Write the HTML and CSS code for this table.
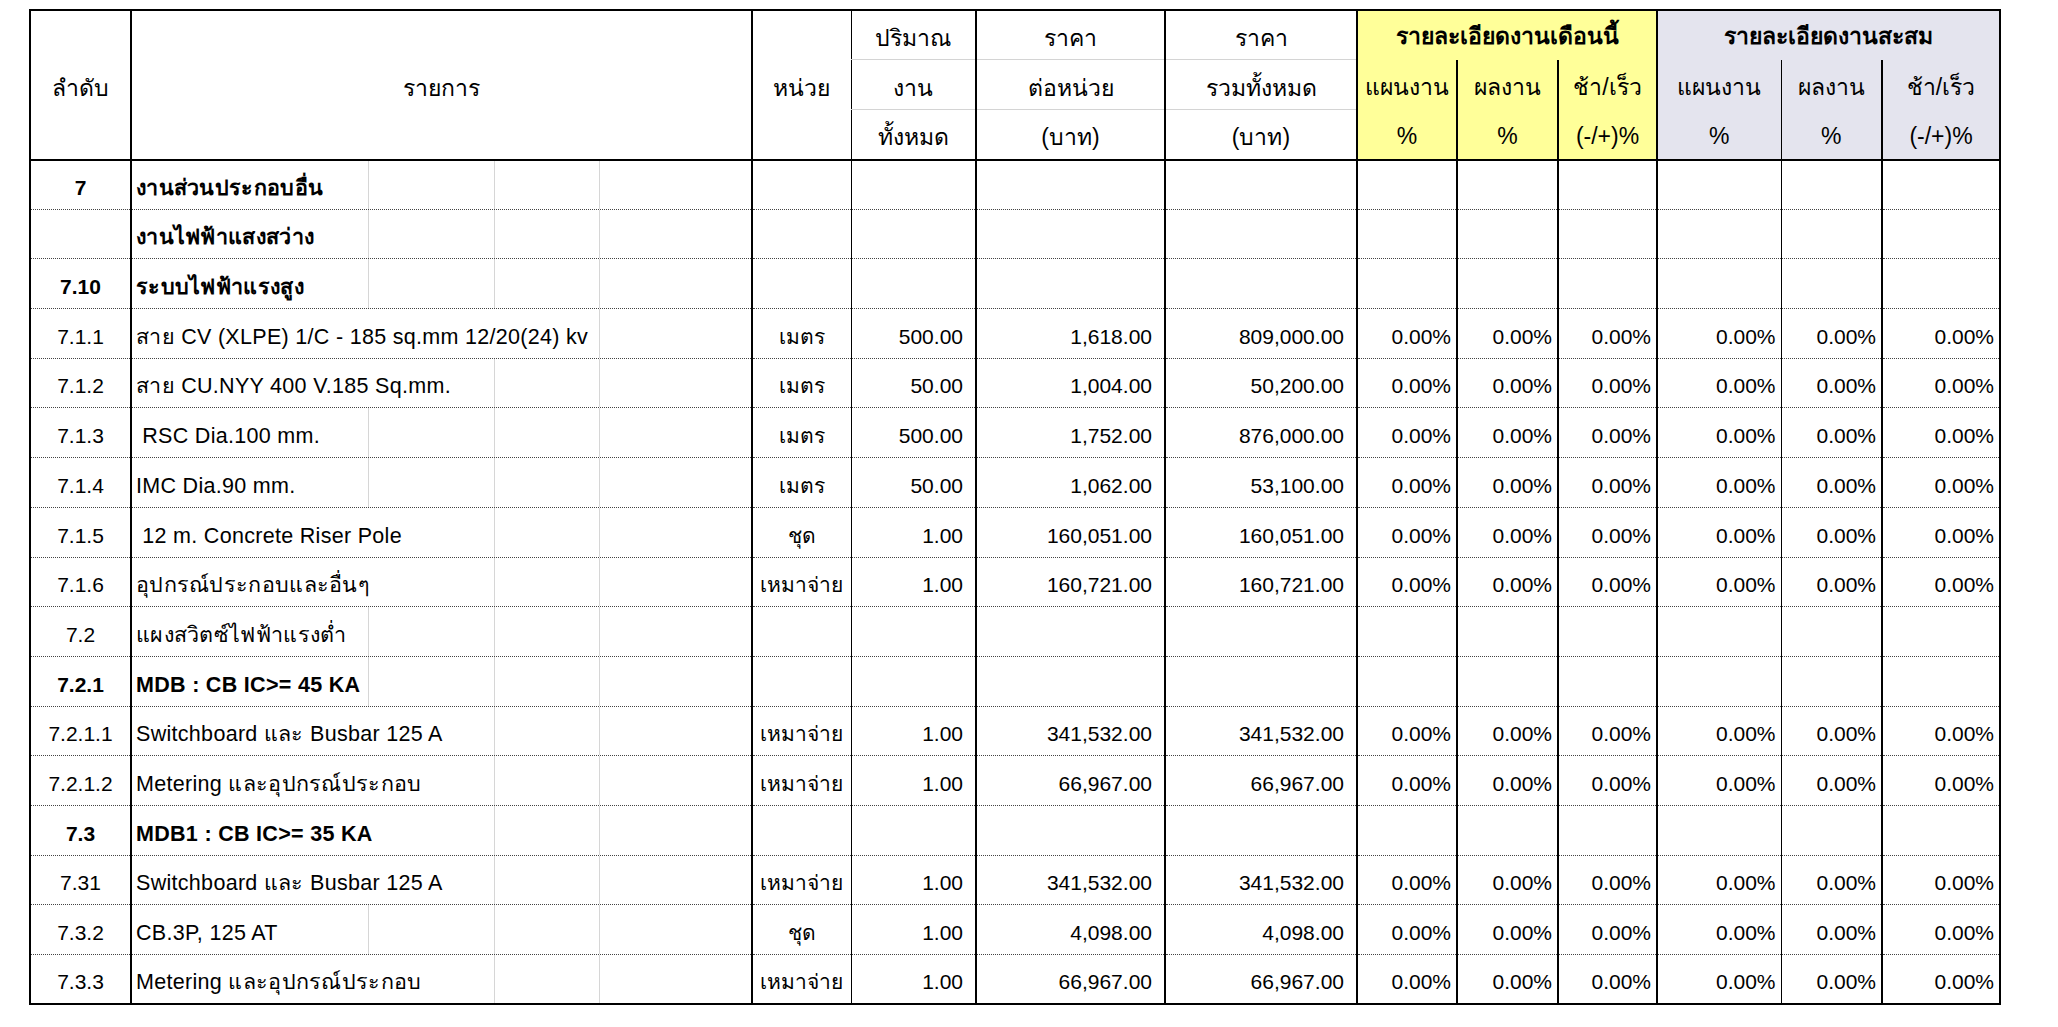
FILE: index.html
```html
<!DOCTYPE html>
<html lang="th">
<head>
<meta charset="utf-8">
<title>รายละเอียดงาน</title>
<link rel="stylesheet" href="styles.css">
</head>
<body>
<table class="sheet">
  <colgroup>
    <col class="c-no">
    <col class="c-item">
    <col class="c-unit">
    <col class="c-qty">
    <col class="c-price">
    <col class="c-total">
    <col class="c-p1">
    <col class="c-p2">
    <col class="c-p3">
    <col class="c-p4">
    <col class="c-p5">
    <col class="c-p6">
  </colgroup>
  <thead>
    <tr class="hr">
      <th rowspan="3" class="hb">ลำดับ</th>
      <th rowspan="3" class="hb">รายการ</th>
      <th rowspan="3" class="hb">หน่วย</th>
      <th class="grid">ปริมาณ</th>
      <th class="grid">ราคา</th>
      <th class="grid">ราคา</th>
      <th colspan="3" class="yel grp">รายละเอียดงานเดือนนี้</th>
      <th colspan="3" class="gry grp">รายละเอียดงานสะสม</th>
    </tr>
    <tr class="hr">
      <th class="grid">งาน</th>
      <th class="grid">ต่อหน่วย</th>
      <th class="grid">รวมทั้งหมด</th>
      <th rowspan="2" class="yel sub hb"><div class="l1">แผนงาน</div><div class="l2">%</div></th>
      <th rowspan="2" class="yel sub hb"><div class="l1">ผลงาน</div><div class="l2">%</div></th>
      <th rowspan="2" class="yel sub hb"><div class="l1">ช้า/เร็ว</div><div class="l2">(-/+)%</div></th>
      <th rowspan="2" class="gry sub hb"><div class="l1">แผนงาน</div><div class="l2">%</div></th>
      <th rowspan="2" class="gry sub hb"><div class="l1">ผลงาน</div><div class="l2">%</div></th>
      <th rowspan="2" class="gry sub hb"><div class="l1">ช้า/เร็ว</div><div class="l2">(-/+)%</div></th>
    </tr>
    <tr class="hr">
      <th class="hb">ทั้งหมด</th>
      <th class="hb">(บาท)</th>
      <th class="hb">(บาท)</th>
    </tr>
  </thead>
  <tbody>
    <tr><td class="no b">7</td><td class="item b"><span class="t">งานส่วนประกอบอื่น</span></td><td></td><td></td><td></td><td></td><td></td><td></td><td></td><td></td><td></td><td></td></tr>
    <tr><td class="no"></td><td class="item b"><span class="t">งานไฟฟ้าแสงสว่าง</span></td><td></td><td></td><td></td><td></td><td></td><td></td><td></td><td></td><td></td><td></td></tr>
    <tr><td class="no b">7.10</td><td class="item b"><span class="t">ระบบไฟฟ้าแรงสูง</span></td><td></td><td></td><td></td><td></td><td></td><td></td><td></td><td></td><td></td><td></td></tr>
    <tr><td class="no">7.1.1</td><td class="item"><span class="t">สาย CV (XLPE) 1/C - 185 sq.mm 12/20(24) kv</span></td><td class="unit">เมตร</td><td class="num">500.00</td><td class="num">1,618.00</td><td class="num">809,000.00</td><td class="pct">0.00%</td><td class="pct">0.00%</td><td class="pct">0.00%</td><td class="pct">0.00%</td><td class="pct">0.00%</td><td class="pct">0.00%</td></tr>
    <tr><td class="no">7.1.2</td><td class="item"><span class="t">สาย CU.NYY 400 V.185 Sq.mm.</span></td><td class="unit">เมตร</td><td class="num">50.00</td><td class="num">1,004.00</td><td class="num">50,200.00</td><td class="pct">0.00%</td><td class="pct">0.00%</td><td class="pct">0.00%</td><td class="pct">0.00%</td><td class="pct">0.00%</td><td class="pct">0.00%</td></tr>
    <tr><td class="no">7.1.3</td><td class="item"><span class="t"> RSC Dia.100 mm.</span></td><td class="unit">เมตร</td><td class="num">500.00</td><td class="num">1,752.00</td><td class="num">876,000.00</td><td class="pct">0.00%</td><td class="pct">0.00%</td><td class="pct">0.00%</td><td class="pct">0.00%</td><td class="pct">0.00%</td><td class="pct">0.00%</td></tr>
    <tr><td class="no">7.1.4</td><td class="item"><span class="t">IMC Dia.90 mm.</span></td><td class="unit">เมตร</td><td class="num">50.00</td><td class="num">1,062.00</td><td class="num">53,100.00</td><td class="pct">0.00%</td><td class="pct">0.00%</td><td class="pct">0.00%</td><td class="pct">0.00%</td><td class="pct">0.00%</td><td class="pct">0.00%</td></tr>
    <tr><td class="no">7.1.5</td><td class="item"><span class="t"> 12 m. Concrete Riser Pole</span></td><td class="unit">ชุด</td><td class="num">1.00</td><td class="num">160,051.00</td><td class="num">160,051.00</td><td class="pct">0.00%</td><td class="pct">0.00%</td><td class="pct">0.00%</td><td class="pct">0.00%</td><td class="pct">0.00%</td><td class="pct">0.00%</td></tr>
    <tr><td class="no">7.1.6</td><td class="item"><span class="t">อุปกรณ์ประกอบและอื่นๆ</span></td><td class="unit">เหมาจ่าย</td><td class="num">1.00</td><td class="num">160,721.00</td><td class="num">160,721.00</td><td class="pct">0.00%</td><td class="pct">0.00%</td><td class="pct">0.00%</td><td class="pct">0.00%</td><td class="pct">0.00%</td><td class="pct">0.00%</td></tr>
    <tr><td class="no">7.2</td><td class="item"><span class="t">แผงสวิตซ์ไฟฟ้าแรงต่ำ</span></td><td></td><td></td><td></td><td></td><td></td><td></td><td></td><td></td><td></td><td></td></tr>
    <tr><td class="no b">7.2.1</td><td class="item sb"><span class="t">MDB : CB IC&gt;= 45 KA</span></td><td></td><td></td><td></td><td></td><td></td><td></td><td></td><td></td><td></td><td></td></tr>
    <tr><td class="no">7.2.1.1</td><td class="item"><span class="t">Switchboard และ Busbar 125 A</span></td><td class="unit">เหมาจ่าย</td><td class="num">1.00</td><td class="num">341,532.00</td><td class="num">341,532.00</td><td class="pct">0.00%</td><td class="pct">0.00%</td><td class="pct">0.00%</td><td class="pct">0.00%</td><td class="pct">0.00%</td><td class="pct">0.00%</td></tr>
    <tr><td class="no">7.2.1.2</td><td class="item"><span class="t">Metering และอุปกรณ์ประกอบ</span></td><td class="unit">เหมาจ่าย</td><td class="num">1.00</td><td class="num">66,967.00</td><td class="num">66,967.00</td><td class="pct">0.00%</td><td class="pct">0.00%</td><td class="pct">0.00%</td><td class="pct">0.00%</td><td class="pct">0.00%</td><td class="pct">0.00%</td></tr>
    <tr><td class="no b">7.3</td><td class="item sb"><span class="t">MDB1 : CB IC&gt;= 35 KA</span></td><td></td><td></td><td></td><td></td><td></td><td></td><td></td><td></td><td></td><td></td></tr>
    <tr><td class="no">7.31</td><td class="item"><span class="t">Switchboard และ Busbar 125 A</span></td><td class="unit">เหมาจ่าย</td><td class="num">1.00</td><td class="num">341,532.00</td><td class="num">341,532.00</td><td class="pct">0.00%</td><td class="pct">0.00%</td><td class="pct">0.00%</td><td class="pct">0.00%</td><td class="pct">0.00%</td><td class="pct">0.00%</td></tr>
    <tr><td class="no">7.3.2</td><td class="item"><span class="t">CB.3P, 125 AT</span></td><td class="unit">ชุด</td><td class="num">1.00</td><td class="num">4,098.00</td><td class="num">4,098.00</td><td class="pct">0.00%</td><td class="pct">0.00%</td><td class="pct">0.00%</td><td class="pct">0.00%</td><td class="pct">0.00%</td><td class="pct">0.00%</td></tr>
    <tr><td class="no">7.3.3</td><td class="item"><span class="t">Metering และอุปกรณ์ประกอบ</span></td><td class="unit">เหมาจ่าย</td><td class="num">1.00</td><td class="num">66,967.00</td><td class="num">66,967.00</td><td class="pct">0.00%</td><td class="pct">0.00%</td><td class="pct">0.00%</td><td class="pct">0.00%</td><td class="pct">0.00%</td><td class="pct">0.00%</td></tr>
  </tbody>
</table>
</body>
</html>
```

FILE: styles.css
```css
html, body {
  margin: 0;
  padding: 0;
  background: #fff;
}

body {
  padding: 9px 0 0 29px;
  font-family: "Liberation Sans", "Noto Sans", sans-serif;
  color: #000;
}

.sheet {
  border-collapse: collapse;
  table-layout: fixed;
  width: 1970px;
  border: 2px solid #000;
  font-size: 21px;
}

.c-no { width: 101px; border-right: 2px solid #000; }
.c-item { width: 621px; border-right: 2px solid #000; }
.c-unit { width: 99px; border-right: 1px solid #000; }
.c-qty { width: 125px; border-right: 2px solid #000; }
.c-price { width: 189px; border-right: 2px solid #000; }
.c-total { width: 192px; border-right: 2px solid #000; }
.c-p1 { width: 100px; border-right: 2px solid #000; }
.c-p2 { width: 101px; border-right: 2px solid #000; }
.c-p3 { width: 99px; border-right: 2px solid #000; }
.c-p4 { width: 124px; border-right: 1px solid #000; }
.c-p5 { width: 101px; border-right: 2px solid #000; }
.c-p6 { width: 118px; }

.hr { height: 49.5px; }

th {
  font-weight: normal;
  font-size: 23px;
  line-height: 26px;
  padding: 6px 2px 0 2px;
  text-align: center;
  vertical-align: middle;
  white-space: nowrap;
}

th.grid {
  border-bottom: 1px solid #d4d4d4;
}

th.hb {
  border-bottom: 2px solid #000;
}

th.grp {
  font-weight: bold;
  padding-top: 2px;
}

.yel { background: #ffff99; }
.gry { background: #e4e4ee; }

th.sub {
  padding: 0 2px;
}

th.sub .l1,
th.sub .l2 {
  box-sizing: border-box;
  height: 49.5px;
  padding-top: 6px;
  line-height: 43.5px;
}

tbody tr {
  height: 49.7px;
}

td {
  font-size: 21px;
  line-height: 24px;
  padding: 0 4px 9px 4px;
  vertical-align: bottom;
  white-space: nowrap;
  border-bottom: 1px dotted #444;
}

td.no {
  text-align: center;
}

td.item {
  white-space: pre;
  font-size: 21.5px;
  letter-spacing: 0.3px;
  background-image:
    linear-gradient(#d6d6d6, #d6d6d6),
    linear-gradient(#d6d6d6, #d6d6d6),
    linear-gradient(#d6d6d6, #d6d6d6);
  background-size: 1px 100%;
  background-repeat: no-repeat;
  background-position: 236px 0, 362px 0, 467px 0;
  overflow: hidden;
}

td.item .t {
  background: #fff;
  padding: 30px 0;
}

td.unit {
  text-align: center;
}

td.num {
  text-align: right;
  padding-right: 12px;
}

td.pct {
  text-align: right;
  padding-right: 5px;
}

.b { font-weight: bold; }
.sb { font-weight: bold; }
```
